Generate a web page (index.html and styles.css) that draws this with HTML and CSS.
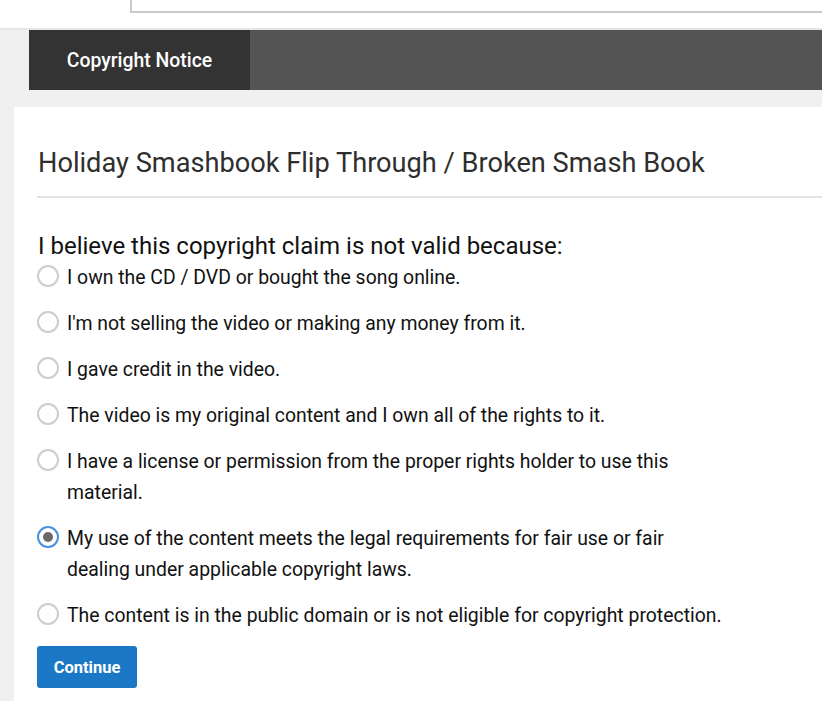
FILE: index.html
```html
<!DOCTYPE html>
<html>
<head>
<meta charset="utf-8">
<link rel="stylesheet" href="styles.css">
</head>
<body>
<header class="top">
  <div class="search-box"></div>
</header>
<main class="main">
  <nav class="tabs">
    <div class="tab active">Copyright Notice</div>
  </nav>
  <section class="card">
    <h1 class="title">Holiday Smashbook Flip Through / Broken Smash Book</h1>
    <hr class="divider">
    <form class="dispute">
      <p class="question">I believe this copyright claim is not valid because:</p>
      <div class="options">
        <label class="option"><input type="radio" name="reason"><span>I own the CD / DVD or bought the song online.</span></label>
        <label class="option"><input type="radio" name="reason"><span>I'm not selling the video or making any money from it.</span></label>
        <label class="option"><input type="radio" name="reason"><span>I gave credit in the video.</span></label>
        <label class="option"><input type="radio" name="reason"><span>The video is my original content and I own all of the rights to it.</span></label>
        <label class="option"><input type="radio" name="reason"><span>I have a license or permission from the proper rights holder to use this material.</span></label>
        <label class="option"><input type="radio" name="reason" checked><span>My use of the content meets the legal requirements for fair use or fair dealing under applicable copyright laws.</span></label>
        <label class="option"><input type="radio" name="reason"><span>The content is in the public domain or is not eligible for copyright protection.</span></label>
      </div>
      <button type="button" class="btn-continue">Continue</button>
    </form>
  </section>
</main>
</body>
</html>
```
FILE: styles.css
```css
* { box-sizing: border-box; }
html, body {
  margin: 0;
  padding: 0;
  overflow: hidden;
  height: 100%;
}
body {
  font-family: Roboto, "Liberation Sans", Arial, sans-serif;
  background: #f0f0f0;
  color: #111;
}
.top {
  height: 28px;
  background: #fff;
  padding-left: 130px;
  overflow: hidden;
}
.search-box {
  height: 13px;
  margin-right: -10px;
  border-left: 2px solid #c9c9c9;
  border-bottom: 2px solid #c9c9c9;
  background: #fff;
}
.main {
  border-top: 2px solid #e6e6e6;
  background: #f0f0f0;
  padding-left: 14px;
  min-height: calc(100% - 28px);
  display: flex;
  flex-direction: column;
}
.tabs {
  margin-left: 15px;
  height: 60px;
  background: #545454;
  display: flex;
}
.tab {
  width: 221px;
  display: flex;
  align-items: center;
  justify-content: center;
  color: #fff;
  font-size: 19.4px;
  font-weight: 500;
}
.tab.active { background: #333; }
.card {
  margin-top: 17px;
  flex: 1;
  background: #fff;
  padding: 41px 0 20px 24px;
}
.title {
  margin: 0;
  font-size: 27.2px;
  line-height: 31px;
  font-weight: 400;
  color: #2e2e2e;
}
.divider {
  margin: 17px 0 0 -1px;
  border: 0;
  height: 2px;
  background: #e2e2e2;
}
.dispute { margin: 0; }
.question {
  margin: 34px 0 0;
  font-size: 24px;
  line-height: 28px;
  color: #111;
}
.options {
  display: flex;
  flex-direction: column;
  gap: 15px;
  max-width: 691px;
  margin: 2px 0 0 -1px;
}
.option {
  display: flex;
  align-items: flex-start;
  gap: 8px;
  font-size: 19.4px;
  line-height: 31px;
  color: #111;
}
.option input {
  appearance: none;
  -webkit-appearance: none;
  flex: none;
  width: 22px;
  height: 22px;
  margin: 3px 0 0;
  border: 2px solid #cdcdcd;
  border-radius: 50%;
  background: #fff;
  position: relative;
}
.option input:checked {
  border-color: #4a90e2;
}
.option input:checked::after {
  content: "";
  position: absolute;
  left: 4px;
  top: 4px;
  width: 10px;
  height: 10px;
  border-radius: 50%;
  background: #6a6a6a;
}
.btn-continue {
  margin-top: 15px;
  margin-left: -1px;
  width: 100px;
  height: 42px;
  border: 0;
  border-radius: 3px;
  background: #1a78c6;
  color: #fff;
  font-family: Roboto, "Liberation Sans", Arial, sans-serif;
  font-size: 16.5px;
  font-weight: 700;
}
```
